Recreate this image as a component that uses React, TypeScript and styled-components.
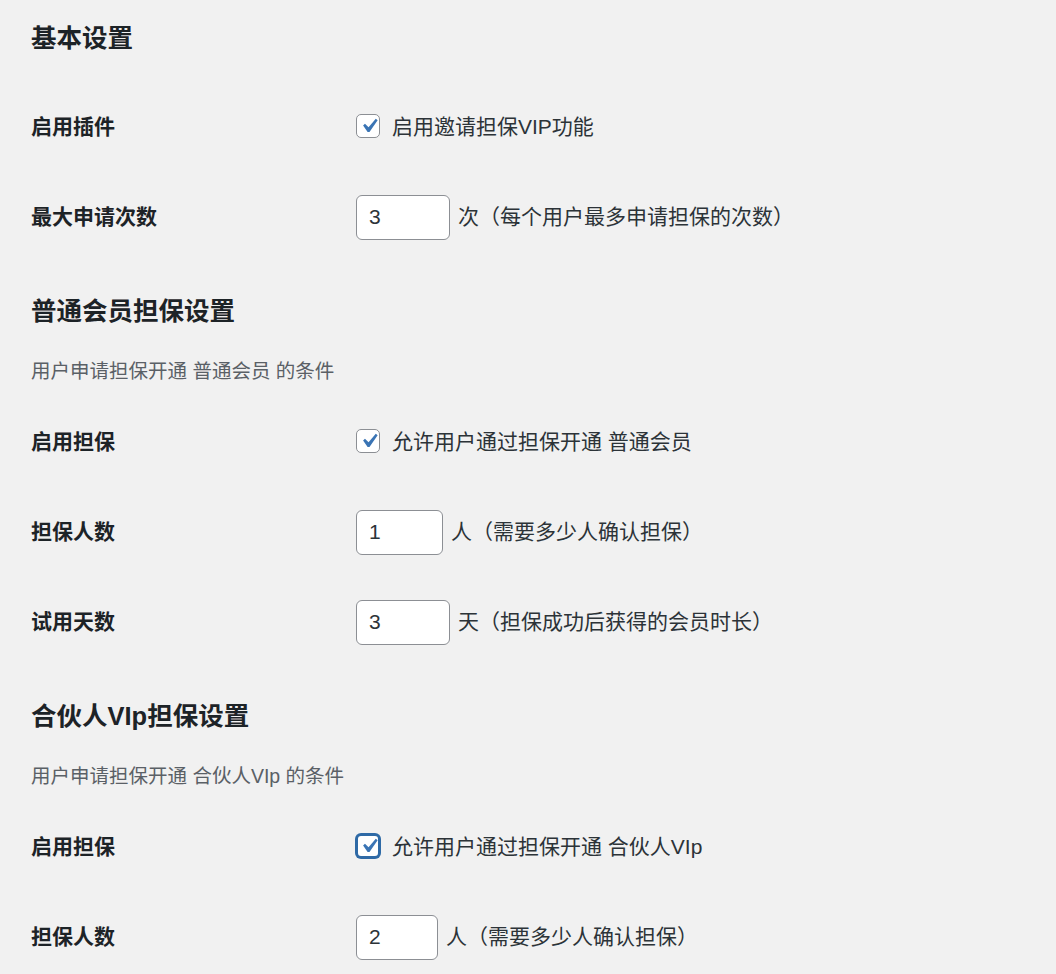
import React, { useState } from 'react'
import styled, { createGlobalStyle } from 'styled-components'

// invite-guarantee VIP plugin settings page (WP admin look, drawn at 1.5x)

const GlobalStyle = createGlobalStyle`
  html, body {
    margin: 0;
    padding: 0;
    background: #f1f1f1;
  }
  body {
    font-family: "Liberation Sans", "Noto Sans CJK SC", sans-serif;
    color: #3c434a;
  }
`;

const Page = styled.div`
  padding: 22px 0 0 31px;
  min-height: 952px;
`;

const Section = styled.section`
  & + & {
    margin-top: 33px;
  }
`;

const Heading = styled.h2`
  margin: 0;
  font-size: 25.5px;
  line-height: 32px;
  font-weight: 700;
  color: #1d2327;
`;

const Description = styled.p`
  margin: 30px 0 0;
  font-size: 19.5px;
  line-height: 28px;
  color: #5a6066;
`;

const FormTable = styled.div<{ $afterDesc?: boolean }>`
  margin-top: ${p => (p.$afterDesc ? '12px' : '28px')};
`;

const Row = styled.div`
  display: grid;
  grid-template-columns: 325px 1fr;
  align-items: center;
  height: 90px;
`;

const Label = styled.div`
  font-size: 21px;
  font-weight: 700;
  color: #1d2327;
  line-height: 30px;
`;

const Control = styled.div`
  display: flex;
  align-items: center;
  font-size: 21px;
  line-height: 30px;
  color: #2c3338;
`;

const CheckLabel = styled.label`
  display: flex;
  align-items: center;
  gap: 12px;
  cursor: pointer;
`;

const Box = styled.span<{ $focused?: boolean }>`
  box-sizing: border-box;
  width: 24px;
  height: 24px;
  margin-top: -3px;
  border-radius: 5px;
  background: #fff;
  border: ${p => (p.$focused ? '2px solid #2f6aa6' : '1px solid #8c8f94')};
  box-shadow: ${p => (p.$focused ? '0 0 0 1px #2f6aa6' : 'none')};
  display: flex;
  align-items: center;
  justify-content: center;
  svg {
    width: 28px;
    height: 28px;
    flex: none;
    margin-left: 1px;
  }
`;

const NumberInput = styled.input<{ $w: number }>`
  box-sizing: border-box;
  width: ${p => p.$w}px;
  height: 45px;
  padding: 0 12px;
  border: 1px solid #8c8f94;
  border-radius: 6px;
  background: #fff;
  font-family: "Liberation Sans", "Noto Sans CJK SC", sans-serif;
  font-size: 21px;
  color: #2c3338;
  outline: none;
`;

const Suffix = styled.span`
  margin-left: 8px;
  white-space: nowrap;
`;

const CheckMark = () => (
  <svg viewBox="0 0 20 20" aria-hidden="true">
    <path d="M14.83 4.89l1.34.94-5.81 8.38H9.02L5.78 9.67l1.34-1.25 2.57 2.4z" fill="#3a74b4" />
  </svg>
);

type CheckProps = { text: string; focused?: boolean };

const CheckField: React.FC<CheckProps> = ({ text, focused }) => {
  const [on, setOn] = useState(true);
  return (
    <CheckLabel onClick={() => setOn(!on)}>
      <Box role="checkbox" aria-checked={on} $focused={focused}>
        {on && <CheckMark />}
      </Box>
      {text}
    </CheckLabel>
  );
};

type NumProps = { value: string; width: number; suffix: string };

const NumberField: React.FC<NumProps> = ({ value, width, suffix }) => {
  const [v, setV] = useState(value);
  return (
    <>
      <NumberInput $w={width} value={v} onChange={e => setV(e.target.value)} />
      <Suffix>{suffix}</Suffix>
    </>
  );
};

const App: React.FC = () => {
  return (
    <Page>
      <GlobalStyle />
      <Section>
        <Heading>基本设置</Heading>
        <FormTable>
          <Row>
            <Label>启用插件</Label>
            <Control><CheckField text="启用邀请担保VIP功能" /></Control>
          </Row>
          <Row>
            <Label>最大申请次数</Label>
            <Control><NumberField value="3" width={94} suffix="次（每个用户最多申请担保的次数）" /></Control>
          </Row>
        </FormTable>
      </Section>

      <Section>
        <Heading>普通会员担保设置</Heading>
        <Description>用户申请担保开通 普通会员 的条件</Description>
        <FormTable $afterDesc>
          <Row>
            <Label>启用担保</Label>
            <Control><CheckField text="允许用户通过担保开通 普通会员" /></Control>
          </Row>
          <Row>
            <Label>担保人数</Label>
            <Control><NumberField value="1" width={87} suffix="人（需要多少人确认担保）" /></Control>
          </Row>
          <Row>
            <Label>试用天数</Label>
            <Control><NumberField value="3" width={94} suffix="天（担保成功后获得的会员时长）" /></Control>
          </Row>
        </FormTable>
      </Section>

      <Section>
        <Heading>合伙人VIp担保设置</Heading>
        <Description>用户申请担保开通 合伙人VIp 的条件</Description>
        <FormTable $afterDesc>
          <Row>
            <Label>启用担保</Label>
            <Control><CheckField text="允许用户通过担保开通 合伙人VIp" focused /></Control>
          </Row>
          <Row>
            <Label>担保人数</Label>
            <Control><NumberField value="2" width={82} suffix="人（需要多少人确认担保）" /></Control>
          </Row>
        </FormTable>
      </Section>
    </Page>
  )
}

export default App
